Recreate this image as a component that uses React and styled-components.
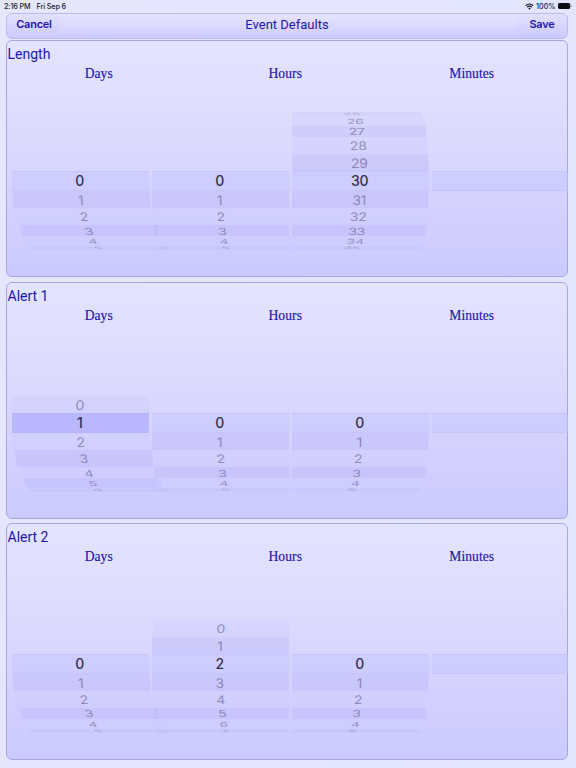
import React from 'react';
import styled, { createGlobalStyle } from 'styled-components';

const GlobalStyle = createGlobalStyle`
  * {
    box-sizing: border-box;
  }
  body {
    margin: 0;
    background: #e4e6fd;
    font-family: Inter, 'Liberation Sans', sans-serif;
  }
`;

const Screen = styled.div`
  width: 576px;
  height: 768px;
  overflow: hidden;
  background: linear-gradient(100deg, #e6e7fc, #e3e5ff 60%, #e2e6fc);
`;

const StatusBar = styled.div`
  display: flex;
  justify-content: space-between;
  align-items: center;
  height: 12px;
  padding: 0 4px 0 4px;
  font-size: 7.2px;
  font-weight: 500;
  color: #20202c;
  div {
    display: flex;
    align-items: center;
    gap: 6px;
  }
  div:first-child {
    letter-spacing: -0.1px;
  }
  div:last-child {
    gap: 2.5px;
  }
`;

const Toolbar = styled.header`
  display: grid;
  grid-template-columns: 54px 1fr 50px;
  align-items: start;
  width: 562px;
  height: 26px;
  margin: 1px 0 0 6px;
  border: 1px solid #bdb9f2;
  border-radius: 6px;
  background: linear-gradient(#e6e4ff, #dad9fe 50%, #cac9fd);
  h1 {
    margin: 3px 4px 0 0;
    font-family: Roboto, sans-serif;
    font-size: 13px;
    line-height: 16px;
    font-weight: 400;
    text-align: center;
    color: #2414ae;
  }
`;

const BarButton = styled.button`
  height: 20px;
  padding: 1px 0 0;
  border: none;
  border-radius: 6px;
  background: linear-gradient(#e2e1ff, #cfcdfe);
  font-family: inherit;
  font-size: 11px;
  line-height: 19px;
  font-weight: 600;
  letter-spacing: -0.25px;
  color: #2414ae;
`;

const Panels = styled.main`
  display: flex;
  flex-direction: column;
  gap: 4.5px;
  padding: 1px 0 0 6px;
`;

const Panel = styled.section`
  width: 562px;
  height: 237px;
  border: 1px solid #a9a5e4;
  border-radius: 6px;
  background: linear-gradient(#e3e4ff, #dddcfe 35%, #d3d1fe 70%, #cbcaff);
  h2 {
    margin: 4px 0 0 0.5px;
    font-family: Roboto, sans-serif;
    font-size: 14px;
    line-height: 19px;
    font-weight: 400;
    color: #2414ae;
  }
`;

const Units = styled.div`
  display: grid;
  grid-template-columns: repeat(3, 186.5px);
  height: 18px;
  margin-left: -1.5px;
  font-family: 'Liberation Serif', serif;
  font-size: 13.6px;
  line-height: 20px;
  letter-spacing: 0.05px;
  text-align: center;
  color: #2414ae;
  -webkit-text-stroke: 0.15px #2414ae;
`;

const Wheels = styled.div`
  display: grid;
  grid-template-columns: repeat(4, 137px);
  gap: 3px;
  padding: 30px 0 0 5px;
`;

const Wheel = styled.div`
  display: flex;
  flex-direction: column;
  clip-path: ${({ $clip }) => $clip};
`;

const Row = styled.div`
  display: flex;
  align-items: center;
  justify-content: center;
  height: ${({ $height }) => $height}px;
  padding-right: 1.5px;
  background: ${({ $fill }) => $fill};
  box-shadow: ${({ $selected }) =>
    $selected ? 'inset 0 1px rgba(170, 168, 220, 0.22), inset 0 -1px rgba(170, 168, 220, 0.18)' : 'none'};
  color: ${({ $selected }) => ($selected ? '#34314f' : '#504a7c')};
  font-size: 14px;
  font-weight: ${({ $selected }) => ($selected ? 500 : 400)};
  line-height: 1;
  letter-spacing: -0.2px;
  transform: translateX(${({ $shift }) => $shift}px) skewX(${({ $skew }) => $skew}deg);
  span {
    opacity: ${({ $opacity }) => $opacity};
    transform: scaleY(${({ $squash }) => $squash});
  }
`;

// distance from the selected row -> height, vertical squash and text opacity
const rings = [
  { height: 20, squash: 1, opacity: 1 },
  { height: 17, squash: 0.94, opacity: 0.52 },
  { height: 17, squash: 0.84, opacity: 0.5 },
  { height: 11, squash: 0.7, opacity: 0.48 },
  { height: 10, squash: 0.5, opacity: 0.44 },
  { height: 4, squash: 0.22, opacity: 0.32 },
];

const shifts = [
  [0, 1, 4, 9, 13, 18],
  [0, 0, 1, 2.5, 4, 5.5],
  [0, -0.5, -1.5, -3, -4.5, -8],
  [0, 0, 0, 0, 0, 0],
];

const skews = [
  [0, 3, 7, 14, 20, 25],
  [0, 1, 3, 6, 8, 10],
  [0, -1, -3, -6, -8, -10],
  [0, 0, 0, 0, 0, 0],
];

const clips = ['none', 'inset(0)', 'inset(0 -4px 0 0)', 'inset(0 1px 0 0)'];

const offsets = [-5, -4, -3, -2, -1, 0, 1, 2, 3, 4, 5];

function rowFill(value, offset, marked) {
  if (offset === 0) return marked ? '#b9b7ff' : 'rgba(198, 198, 255, 0.5)';
  if (value === null) return 'transparent';
  if (Math.abs(offset) === 5) return 'rgba(184, 181, 240, 0.22)';
  return value % 2 ? 'rgba(184, 181, 246, 0.38)' : 'rgba(206, 205, 255, 0.4)';
}

const PickerWheel = ({ value, column }) => (
  <Wheel $clip={clips[column]}>
    {offsets.map((offset) => {
      const distance = Math.abs(offset);
      const ring = rings[distance];
      const hasValue = value !== null && value + offset >= 0;
      const number = hasValue ? value + offset : null;
      const side = offset < 0 ? -1 : 1;
      return (
        <Row
          key={offset}
          $height={ring.height}
          $squash={ring.squash}
          $opacity={ring.opacity}
          $selected={offset === 0}
          $shift={offset < 0 && column === 0 ? 0 : shifts[column][distance]}
          $skew={side * skews[column][distance]}
          $fill={rowFill(number, offset, value === 1)}
        >
          {hasValue && <span>{number}</span>}
        </Row>
      );
    })}
  </Wheel>
);

const sections = [
  { title: 'Length', values: [0, 0, 30, null] },
  { title: 'Alert 1', values: [1, 0, 0, null] },
  { title: 'Alert 2', values: [0, 2, 0, null] },
];

const WifiIcon = () => (
  <svg width="9" height="7" viewBox="0 0 18 14">
    <path d="M1.5 5.2a11 11 0 0 1 15 0M4.5 8.4a6.5 6.5 0 0 1 9 0" fill="none" stroke="#161622" strokeWidth="2.5" />
    <path d="M6.5 10.6a3.6 3.6 0 0 1 5 0L9 13.3z" fill="#161622" />
  </svg>
);

const BatteryIcon = () => (
  <svg width="14" height="6" viewBox="0 0 14 6">
    <rect x="0" y="0" width="12.2" height="6" rx="1.4" fill="#0c0c14" />
    <path d="M12.8 2v2q1-.3 1-1t-1-1z" fill="#777789" />
  </svg>
);

const App = () => (
  <Screen>
    <GlobalStyle />
    <StatusBar>
      <div>
        <span>2:16 PM</span>
        <span>Fri Sep 6</span>
      </div>
      <div>
        <WifiIcon />
        <span>100%</span>
        <BatteryIcon />
      </div>
    </StatusBar>
    <Toolbar>
      <BarButton>Cancel</BarButton>
      <h1>Event Defaults</h1>
      <BarButton>Save</BarButton>
    </Toolbar>
    <Panels>
      {sections.map(({ title, values }) => (
        <Panel key={title}>
          <h2>{title}</h2>
          <Units>
            <span>Days</span>
            <span>Hours</span>
            <span>Minutes</span>
          </Units>
          <Wheels>
            {values.map((value, column) => (
              <PickerWheel key={column} value={value} column={column} />
            ))}
          </Wheels>
        </Panel>
      ))}
    </Panels>
  </Screen>
);

export default App;
